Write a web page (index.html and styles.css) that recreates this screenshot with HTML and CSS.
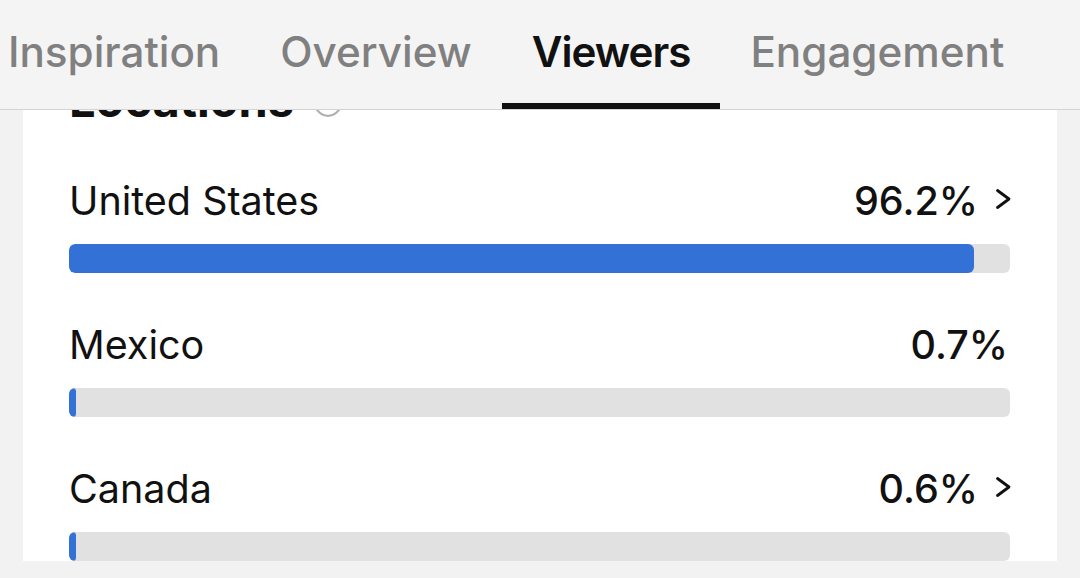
FILE: index.html
```html
<!DOCTYPE html>
<html lang="en">
<head>
<meta charset="utf-8">
<title>Viewers – Locations</title>
<link rel="stylesheet" href="styles.css">
</head>
<body>
<header class="topbar">
  <nav class="tab-row">
    <a class="tab">Inspiration</a>
    <a class="tab">Overview</a>
    <a class="tab tab-active">Viewers</a>
    <a class="tab">Engagement</a>
  </nav>
</header>
<main class="page">
  <section class="card">
    <h2 class="card-title">Locations
      <svg class="info" viewBox="0 0 28 28" width="28" height="28"><circle cx="14" cy="14" r="12.8" fill="none" stroke="#b0b0b0" stroke-width="2.2"/></svg>
    </h2>
    <ul class="loc-list">
      <li class="loc">
        <div class="loc-head">
          <span class="loc-name">United States</span>
          <span class="loc-value">96.2%<svg class="chev" viewBox="0 0 16 22" width="16" height="22"><path d="M2.5 2.5 L14 11 L2.5 19.5" fill="none" stroke="#111" stroke-width="2.8" stroke-linecap="round" stroke-linejoin="round"/></svg></span>
        </div>
        <div class="bar"><div class="fill" style="width:96.2%"></div></div>
      </li>
      <li class="loc">
        <div class="loc-head">
          <span class="loc-name">Mexico</span>
          <span class="loc-value loc-value-plain">0.7%</span>
        </div>
        <div class="bar"><div class="fill" style="width:0.7%"></div></div>
      </li>
      <li class="loc">
        <div class="loc-head">
          <span class="loc-name">Canada</span>
          <span class="loc-value">0.6%<svg class="chev" viewBox="0 0 16 22" width="16" height="22"><path d="M2.5 2.5 L14 11 L2.5 19.5" fill="none" stroke="#111" stroke-width="2.8" stroke-linecap="round" stroke-linejoin="round"/></svg></span>
        </div>
        <div class="bar"><div class="fill" style="width:0.6%"></div></div>
      </li>
    </ul>
  </section>
</main>
</body>
</html>
```

FILE: styles.css
```css
* { box-sizing: border-box; }
html, body {
  margin: 0;
  padding: 0;
}
body {
  width: 1080px;
  height: 578px;
  overflow: hidden;
  background: #f2f2f2;
  font-family: Inter, "Noto Sans", "Liberation Sans", sans-serif;
  color: #111;
}
.topbar {
  position: relative;
  z-index: 2;
  height: 110px;
  background: #f4f4f4;
  border-bottom: 1px solid #d4d4d4;
}
.tab-row {
  display: flex;
  height: 109px;
  margin-left: -22px;
}
.tab {
  display: flex;
  align-items: flex-start;
  padding: 27px 30px 0;
  font-size: 42.2px;
  line-height: 50px;
  font-weight: 500;
  color: #808080;
}
.tab-active {
  color: #111;
  font-weight: 600;
  letter-spacing: -1px;
  border-bottom: 6px solid #111;
}
.page {
  display: flex;
  padding: 0 23px;
}
.card {
  flex: 1;
  background: #fff;
  margin-top: -35px;
  padding: 0 47px 0 46px;
  position: relative;
  z-index: 1;
}
.card-title {
  margin: 0;
  font-size: 47px;
  line-height: 50px;
  font-weight: 700;
  display: flex;
  align-items: flex-end;
  gap: 20px;
}
.info { margin-bottom: 8px; }
.loc-list {
  list-style: none;
  margin: 54px 0 0;
  padding: 0;
  display: flex;
  flex-direction: column;
  gap: 50px;
}
.loc-head {
  display: flex;
  justify-content: space-between;
  align-items: center;
  height: 44px;
  font-size: 39.5px;
  line-height: 44px;
}
.loc-name { font-weight: 400; }
.loc-value {
  display: flex;
  align-items: center;
  gap: 17px;
  font-weight: 500;
}
.loc-value-plain { padding-right: 2px; }
.chev { margin-top: -5px; margin-right: -1px; }
.bar {
  margin-top: 21px;
  height: 29px;
  background: #e1e1e1;
  border-radius: 6px;
  overflow: hidden;
}
.fill {
  height: 100%;
  min-width: 7px;
  background: #3371d6;
  border-radius: 6px;
}
```
